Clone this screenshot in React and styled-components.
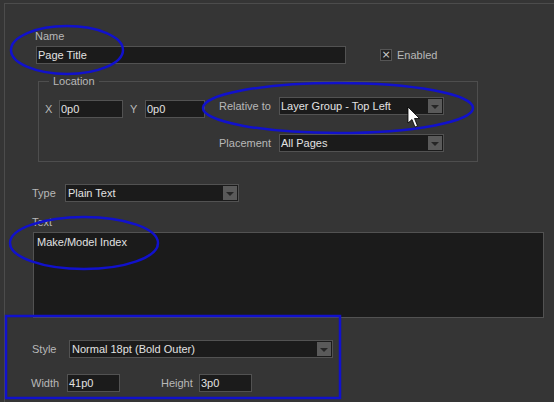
import React from 'react'
import styled, { createGlobalStyle } from 'styled-components'

const GlobalStyle = createGlobalStyle`
  html, body {
    margin: 0;
    padding: 0;
    background: #353535;
    overflow: hidden;
  }
  body {
    font-family: "Liberation Sans", Arial, sans-serif;
    font-size: 11px;
    color: #c4c4c4;
  }
`

const Page = styled.div`
  position: relative;
  width: 554px;
  height: 402px;
  padding: 3px 0 0 4px;
  box-sizing: border-box;
`

const Frame = styled.div`
  height: 399px;
  box-sizing: border-box;
  border-top: 1px solid #4c4c4c;
  border-left: 1px solid #4c4c4c;
  display: flex;
  flex-direction: column;
`

const Label = styled.span`
  display: inline-block;
  line-height: 14px;
  color: #b8b8b8;
  white-space: nowrap;
  width: ${p => (p.$w ? `${p.$w}px` : 'auto')};
  margin-left: ${p => p.$ml || 0}px;
  flex-shrink: 0;
`

const NameBlock = styled.div`
  padding-left: 31px;
  margin-top: 25px;
  display: flex;
  flex-direction: column;
  align-items: flex-start;
  gap: 3px;
`

const Row = styled.div`
  display: flex;
  align-items: center;
  margin-top: ${p => p.$mt || 0}px;
`

const Field = styled.div`
  box-sizing: border-box;
  width: ${p => p.$w}px;
  height: ${p => p.$h || 18}px;
  background: #1b1b1b;
  border: 1px solid #525252;
  color: #e2e2e2;
  line-height: 16px;
  padding-left: ${p => p.$pl || 1}px;
  white-space: nowrap;
  overflow: hidden;
  flex-shrink: 0;
`

const Select = styled(Field)`
  position: relative;
  display: flex;
  align-items: center;
  justify-content: space-between;
  padding-right: 1px;
`

const DropButton = styled.span`
  width: 14px;
  height: 14px;
  background: #5a5a5a;
  display: flex;
  align-items: center;
  justify-content: center;
  &::after {
    content: '';
    border-left: 4px solid transparent;
    border-right: 4px solid transparent;
    border-top: 4px solid #262626;
    margin-top: 1px;
  }
`

const Check = styled.span`
  box-sizing: border-box;
  width: 12px;
  height: 12px;
  margin-left: 34px;
  background: #222;
  border: 1px solid #555;
  color: #cfcfcf;
  font-size: 11px;
  line-height: 10px;
  text-align: center;
  font-family: "DejaVu Sans", sans-serif;
`

const Location = styled.fieldset`
  margin: 10px 0 0 33px;
  padding: 0 0 9px 0;
  width: 440px;
  box-sizing: border-box;
  border: 1px solid #4e4e4e;
  min-width: 0;
`

const Legend = styled.legend`
  margin-left: 10px;
  padding: 0 4px;
  line-height: 14px;
  color: #b8b8b8;
`

const LocationBody = styled.div`
  display: flex;
  align-items: flex-start;
`

const XYGroup = styled.div`
  display: flex;
  align-items: center;
  padding: 12px 0 0 6px;
`

const PlacementGrid = styled.div`
  display: grid;
  grid-template-columns: 60px 165px;
  align-items: center;
  row-gap: 19px;
  padding-top: 9px;
  margin-left: 14px;
`

const Lower = styled.div`
  padding-left: 27px;
  display: flex;
  flex-direction: column;
  align-items: flex-start;
`

const TextBox = styled(Field)`
  margin-top: 3px;
  margin-left: 1px;
  line-height: 14px;
  padding: 2px 3px;
`

const Overlay = styled.svg`
  position: absolute;
  left: 0;
  top: 0;
  pointer-events: none;
`

const Dropdown = ({ w, pl, children }) => (
  <Select $w={w} $pl={pl}>
    <span>{children}</span>
    <DropButton />
  </Select>
)

export default function App() {
  return (
    <Page>
      <GlobalStyle />
      <Frame>
        <NameBlock>
          <Label $ml={-1}>Name</Label>
          <Row>
            <Field $w={310} $pl={1}>Page Title</Field>
            <Check>×</Check>
            <Label $ml={5}>Enabled</Label>
          </Row>
        </NameBlock>

        <Location>
          <Legend>Location</Legend>
          <LocationBody>
            <XYGroup>
              <Label $w={14}>X</Label>
              <Field $w={64}>0p0</Field>
              <Label $w={15} $ml={7}>Y</Label>
              <Field $w={60}>0p0</Field>
            </XYGroup>
            <PlacementGrid>
              <Label>Relative to</Label>
              <Dropdown w={165}>Layer Group - Top Left</Dropdown>
              <Label>Placement</Label>
              <Dropdown w={165}>All Pages</Dropdown>
            </PlacementGrid>
          </LocationBody>
        </Location>

        <Lower>
          <Row $mt={22}>
            <Label $w={33}>Type</Label>
            <Dropdown w={174} pl={2}>Plain Text</Dropdown>
          </Row>
          <Label style={{ marginTop: 13 }}>Text</Label>
          <TextBox $w={511} $h={86}>Make/Model Index</TextBox>
          <Row $mt={22}>
            <Label $w={37}>Style</Label>
            <Dropdown w={264} pl={2}>Normal 18pt (Bold Outer)</Dropdown>
          </Row>
          <Row $mt={16}>
            <Label $w={36} $ml={-1}>Width</Label>
            <Field $w={53}>41p0</Field>
            <Label $w={38} $ml={41}>Height</Label>
            <Field $w={53}>3p0</Field>
          </Row>
        </Lower>
      </Frame>

      <Overlay width="554" height="402" viewBox="0 0 554 402">
        <g fill="none" stroke="#1111cc" strokeWidth="2.5">
          <ellipse cx="67" cy="50" rx="56" ry="24" />
          <ellipse cx="338" cy="108" rx="135" ry="25" />
          <ellipse cx="84" cy="243" rx="74" ry="26" />
          <rect x="6" y="316" width="334" height="82" />
        </g>
        <path
          d="M408 107 L408 123 L412 119.5 L415 127 L417.5 126 L414.5 118.5 L419.5 118.5 Z"
          fill="#fff"
          stroke="#000"
          strokeWidth="0.8"
        />
      </Overlay>
    </Page>
  )
}
